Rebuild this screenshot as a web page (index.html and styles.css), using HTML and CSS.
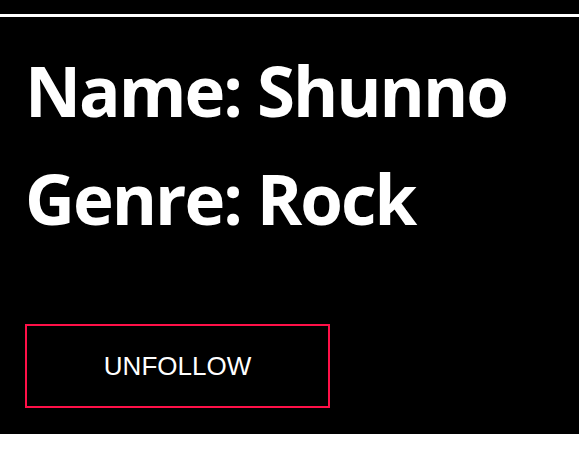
FILE: index.html
```html
<!DOCTYPE html>
<html>
<head>
<meta charset="utf-8">
<link rel="stylesheet" href="styles.css">
</head>
<body>
<div class="card">
  <div class="rule"></div>
  <div class="info">
    <h1 class="line">Name: Shunno</h1>
    <h1 class="line">Genre: Rock</h1>
  </div>
  <button class="follow-btn">UNFOLLOW</button>
</div>
</body>
</html>
```
FILE: styles.css
```css
html, body {
  margin: 0;
  padding: 0;
  background: #ffffff;
}
.card {
  background: #000000;
  height: 434px;
  padding-top: 14px;
  box-sizing: border-box;
  display: flex;
  flex-direction: column;
  align-items: flex-start;
}
.rule {
  align-self: stretch;
  height: 3px;
  background: #ffffff;
}
.info {
  padding: 19px 25px 0 25px;
}
.line {
  margin: 0;
  color: #ffffff;
  font-family: "Open Sans", "Noto Sans", sans-serif;
  font-weight: 700;
  font-size: 69px;
  line-height: 108px;
  letter-spacing: -2px;
  white-space: nowrap;
}
.follow-btn {
  margin: 72px 0 0 25px;
  width: 305px;
  height: 84px;
  box-sizing: border-box;
  background: #000000;
  border: 2px solid #ff1048;
  color: #ffffff;
  font-family: "Liberation Sans", Arial, sans-serif;
  font-size: 26px;
  padding: 0;
}
```
